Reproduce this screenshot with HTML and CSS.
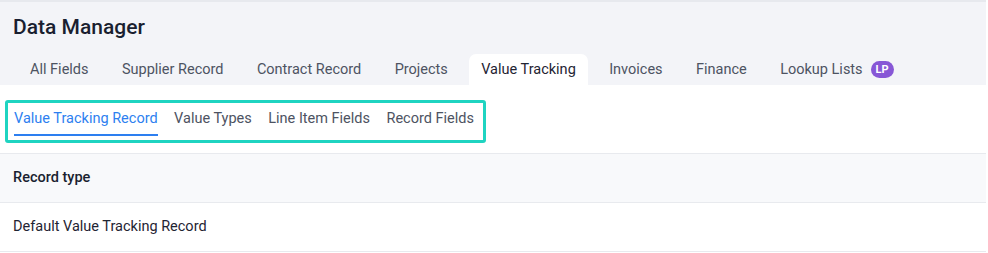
FILE: index.html
```html
<!DOCTYPE html>
<html lang="en">
<head>
    <meta charset="UTF-8">
    <meta name="viewport" content="width=device-width, initial-scale=1.0">
    <title>Data Manager</title>
    <link rel="stylesheet" href="styles.css">
</head>
<body>

<div class="page">
    <div class="header">
        <h1>Data Manager</h1>
        <div class="tabs">
            <div class="tab">All Fields</div>
            <div class="tab">Supplier Record</div>
            <div class="tab">Contract Record</div>
            <div class="tab">Projects</div>
            <div class="tab active">Value Tracking</div>
            <div class="tab">Invoices</div>
            <div class="tab">Finance</div>
            <div class="tab">Lookup Lists <span class="badge">LP</span></div>
        </div>
    </div>

    <div class="subnav">
        <div class="subtabs">
            <div class="subtab active">Value Tracking Record</div>
            <div class="subtab">Value Types</div>
            <div class="subtab">Line Item Fields</div>
            <div class="subtab">Record Fields</div>
        </div>
    </div>

    <div class="table">
        <div class="row head">Record type</div>
        <div class="row">Default Value Tracking Record</div>
    </div>
</div>

</body>
</html>
```

FILE: styles.css
```css
body {
    margin: 0;
    font-family: Roboto, "Liberation Sans", Arial, sans-serif;
    font-size: 14.5px;
    color: #1f2433;
    background: #fff;
}
.page {
    width: 986px;
}
.header {
    background-color: #f3f4f8;
    border-top: 2px solid #e7e9ee;
    padding: 13px 0 0 0;
}
h1 {
    margin: 0 0 0 13px;
    font-size: 21px;
    font-weight: 500;
    line-height: 24px;
    color: #1a1f30;
}
.tabs {
    display: flex;
    gap: 9.4px;
    margin-top: 15px;
    padding-left: 18px;
}
.tab {
    display: flex;
    align-items: center;
    height: 31px;
    padding: 0 12px;
    color: #4d5362;
    border-radius: 7px 7px 0 0;
}
.tab.active {
    background: #fff;
    color: #1f2433;
}
.badge {
    display: inline-block;
    margin-left: 8px;
    padding: 0 5px;
    height: 17px;
    line-height: 17px;
    border-radius: 9px;
    background: #8757d6;
    color: #fff;
    font-size: 11px;
    font-weight: 700;
}
.subnav {
    padding: 15px 0 10px 5px;
    border-bottom: 1px solid #e8eaee;
}
.subtabs {
    display: inline-flex;
    gap: 16.5px;
    padding: 0 9px 4px 6px;
    border: 3px solid #1fd4c1;
    border-radius: 3px;
}
.subtab {
    height: 33px;
    padding-top: 7px;
    box-sizing: border-box;
    color: #4d5362;
}
.subtab.active {
    color: #2d7ff0;
    border-bottom: 2px solid #2d7ff0;
}
.table .row {
    height: 48px;
    line-height: 48px;
    padding-left: 13px;
    border-bottom: 1px solid #e8eaee;
}
.table .row.head {
    background: #f8f9fb;
    font-weight: 500;
    color: #1a1f30;
}
```
